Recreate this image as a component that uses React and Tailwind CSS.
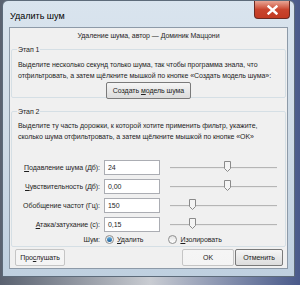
import React from 'react';

const font = { fontFamily: '"Liberation Sans", "DejaVu Sans", sans-serif' };

const rows = [
    { pre: '', acc: 'П', post: 'одавление шума (Дб):', value: '24', pos: 54 },
    { pre: '', acc: 'Ч', post: 'увствительность (Дб):', value: '0,00', pos: 54 },
    { pre: 'Обобщение частот (Гц):', acc: '', post: '', value: '150', pos: 19 },
    { pre: '', acc: 'А', post: 'така/затухание (с):', value: '0,15', pos: 19 },
];

const Slider = ({ pos }) => (
    <div className="relative h-[15px] w-[107px]">
        <div className="absolute left-0 right-0 top-[7px] h-[2px] border-t border-[#b5b5b5] bg-[#e8e8e8]" />
        <svg className="absolute top-[1px]" style={{ left: pos }} width="7" height="11" viewBox="0 0 7 11">
            <path d="M0.5 0.5 H6.5 V7.5 L3.5 10.5 L0.5 7.5 Z" fill="#f4f4f4" stroke="#8a8a8a" />
        </svg>
    </div>
);

const Radio = ({ checked }) => (
    <span className="flex h-[9px] w-[9px] items-center justify-center rounded-full border border-[#8f8f8f] bg-gradient-to-b from-[#e2e2e2] to-white">
        {checked && <span className="h-[5px] w-[5px] rounded-full bg-gradient-to-b from-[#6fb6e4] to-[#1b5e97]" />}
    </span>
);

const Button = ({ children, className = '' }) => (
    <div className={`flex items-center justify-center whitespace-nowrap rounded-[2px] border border-[#7a7a7a] bg-gradient-to-b from-[#f5f5f5] to-[#dcdcdc] text-[#222] ${className}`}>
        {children}
    </div>
);

export default function App() {
    return (
        <div className="h-[285px] w-[300px] overflow-hidden bg-gradient-to-r from-[#5a6270] via-[#c9ccd2] to-[#4a5a8a]" style={font}>
            <div className="ml-[2px] flex h-[277px] w-[293px] flex-col rounded-t-[6px] border border-[#5d6b7a] bg-gradient-to-b from-[#d9e4ee] via-[#cfdbe6] to-[#bfd0e0] px-[6px] pb-[7px]">
                {/* Заголовок окна */}
                <div className="flex h-[26px] shrink-0 items-start justify-between">
                    <span className="mt-[9px] pl-[1px] text-[9px] text-black">Удалить шум</span>
                    <div className="mr-[-2px] flex h-[18px] w-[36px] items-center justify-center rounded-b-[4px] border border-t-0 border-[#6b2a22] bg-gradient-to-b from-[#e8a595] via-[#c9452e] to-[#c23a22]">
                        <svg width="11" height="10" viewBox="0 0 11 10">
                            <path d="M1.5 1.5 L9.5 8.5 M9.5 1.5 L1.5 8.5" stroke="#fff" strokeWidth="2.4" strokeLinecap="square" />
                        </svg>
                    </div>
                </div>

                {/* Клиентская область */}
                <div className="flex min-h-0 flex-1 flex-col whitespace-nowrap border border-[#8d9aa8] bg-[#f0f0f0] px-[1px] text-[7px] leading-[11px] tracking-[-0.05px] text-[#1e1e1e]">
                    <div className="mt-[2px] text-center">Удаление шума, автор — Доминик Маццони</div>

                    <fieldset className="mt-[3px] h-[54px] shrink-0 rounded-[2px] border border-[#d5dfe5] px-[6px]">
                        <legend className="ml-[-1px] px-[1px]">Этап 1</legend>
                        <div className="mt-[4px]">
                            Выделите несколько секунд только шума, так чтобы программа знала, что<br />
                            отфильтровать, а затем щёлкните мышкой по кнопке «Создать модель шума»:
                        </div>
                        <div className="mt-[1px] flex justify-center">
                            <Button className="h-[17px] w-[85px] border-[#3c7fb1] from-[#eaf6fd] to-[#bee6fd]">
                                Создать&nbsp;<span className="underline">м</span>одель шума
                            </Button>
                        </div>
                    </fieldset>

                    <fieldset className="mt-[8px] shrink-0 rounded-[2px] border border-[#d5dfe5] px-[6px] pb-[1px]">
                        <legend className="ml-[-1px] px-[1px]">Этап 2</legend>
                        <div className="mt-[3px]">
                            Выделите ту часть дорожки, к которой хотите применить фильтр, укажите,<br />
                            сколько шума отфильтровать, а затем щёлкните мышкой по кнопке «OK»
                        </div>
                        <div className="mt-[18px] flex flex-col gap-[4px]">
                            {rows.map((r) => (
                                <div key={r.value} className="flex h-[15px] items-center">
                                    <div className="flex w-[82px] shrink-0 justify-end">
                                        <span>
                                            {r.pre}
                                            {r.acc && <span className="underline">{r.acc}</span>}
                                            {r.post}
                                        </span>
                                    </div>
                                    <div className="ml-[4px] h-[15px] w-[56px] shrink-0 border border-[#abadb3] bg-white pl-[3px] leading-[13px]">{r.value}</div>
                                    <div className="ml-[10px] shrink-0">
                                        <Slider pos={r.pos} />
                                    </div>
                                </div>
                            ))}
                        </div>
                        <div className="mt-[1px] flex h-[12px] items-center">
                            <div className="flex w-[82px] shrink-0 justify-end">Шум:</div>
                            <div className="ml-[5px] flex items-center gap-[3px]">
                                <Radio checked />
                                <span><span className="underline">У</span>далить</span>
                            </div>
                            <div className="ml-[25px] flex items-center gap-[3px]">
                                <Radio />
                                <span><span className="underline">И</span>золировать</span>
                            </div>
                        </div>
                    </fieldset>

                    <div className="mt-[2px] flex items-center pl-[4px] pr-[3px]">
                        <Button className="h-[17px] w-[50px] border-[#c5c5c5] from-[#f4f4f4] to-[#f4f4f4] text-[#9a9a9a]">
                            Про<span className="underline">с</span>лушать
                        </Button>
                        <div className="flex-1" />
                        <Button className="h-[17px] w-[52px] border-[#c5c5c5] from-[#f4f4f4] to-[#f4f4f4] text-[#9a9a9a]">OK</Button>
                        <Button className="ml-[1px] h-[17px] w-[48px]">Отменить</Button>
                    </div>
                </div>
            </div>
        </div>
    );
}
